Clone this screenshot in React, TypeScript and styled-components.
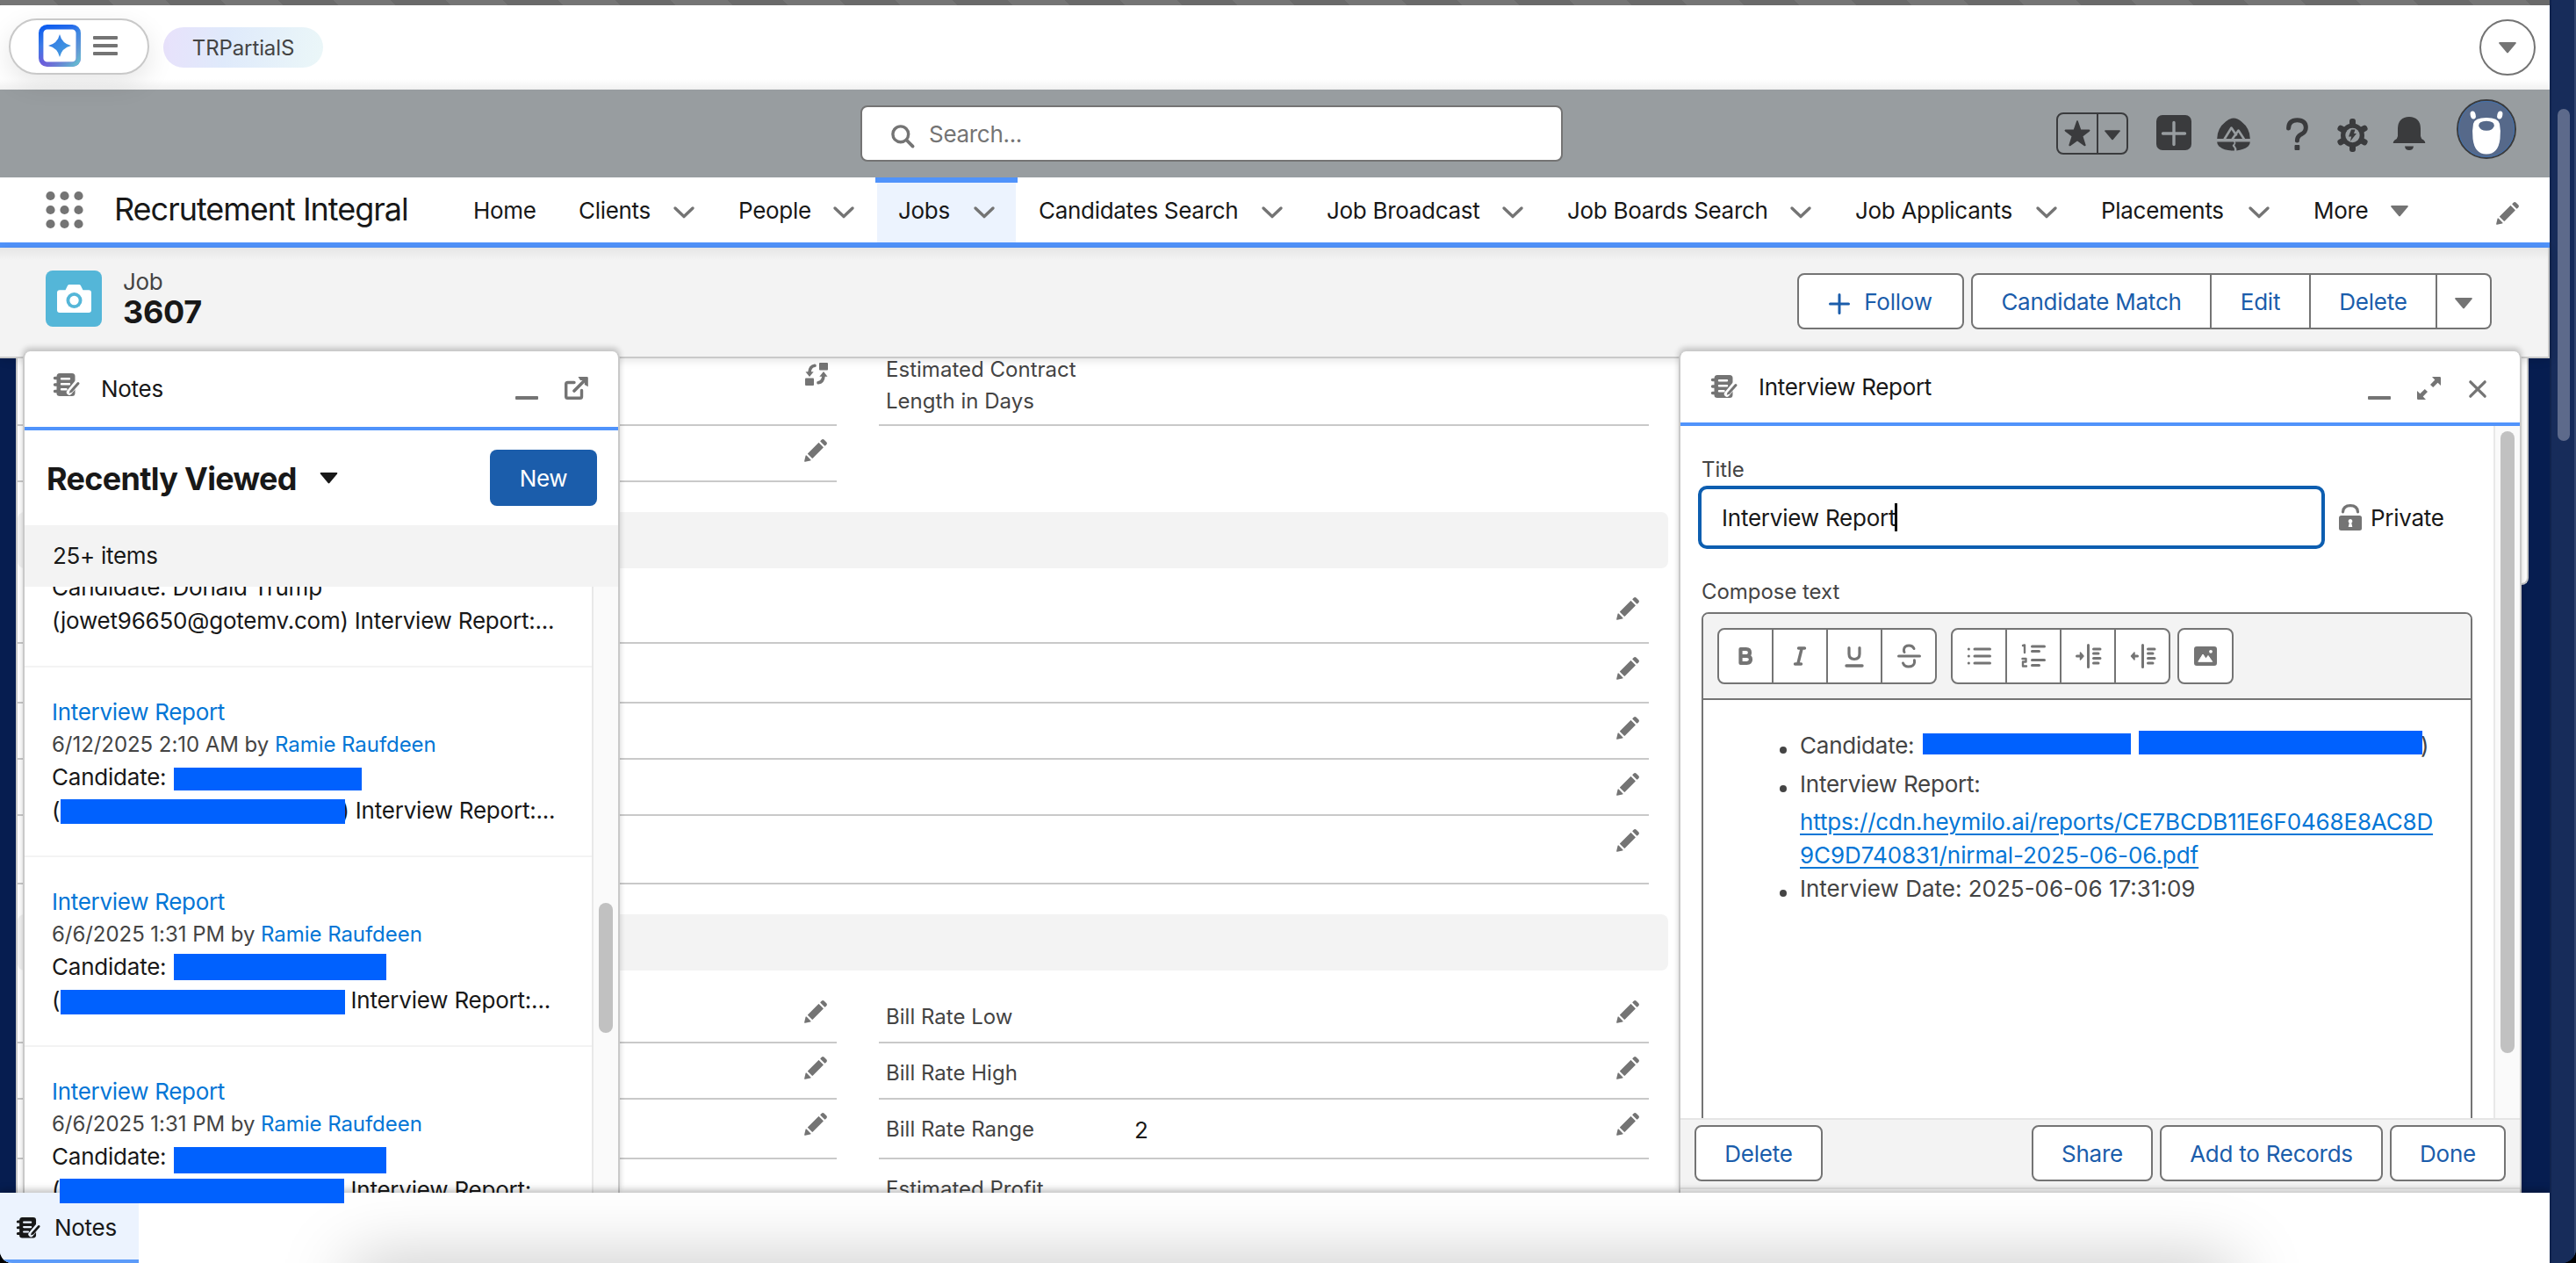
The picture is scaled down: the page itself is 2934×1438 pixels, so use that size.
import React from "react";
import styled, { createGlobalStyle, css } from "styled-components";

const C = {
  text: "#181818",
  weak: "#444444",
  icon: "#747474",
  line: "#c9c9c9",
  gray: "#f3f3f3",
  brand: "#5093fb",
  blue: "#1b5dab",
  link: "#0476d6",
  redact: "#0061fe",
  dark: "#3a3b3d",
};

const GlobalStyle = createGlobalStyle`
  * { box-sizing: border-box; }
  body { margin: 0; background: #000; }
  button { font: inherit; letter-spacing: inherit; padding: 0; margin: 0; }
  ul { list-style: none; margin: 0; padding: 0; }
  svg { display: block; flex: none; overflow: visible; }
`;

/* ---------- frame ---------- */

const Page = styled.div`
  position: relative;
  display: flex;
  width: 2934px;
  height: 1438px;
  overflow: hidden;
  background: #061d4f;
  font-family: Inter, "Liberation Sans", sans-serif;
  font-size: 26px;
  letter-spacing: -0.3px;
  color: ${C.text};
  white-space: nowrap;
  border-radius: 0 0 16px 14px;
`;

const Main = styled.div`
  position: relative;
  width: 2904px;
  display: flex;
  flex-direction: column;
`;

const PageScroll = styled.div`
  width: 30px;
  padding: 124px 5px 0 7px;
  background: #172c5a;
  border-left: 2px solid #10234d;
  border-right: 2px solid #33466f;
`;

const PageThumb = styled.div`
  height: 378px;
  border-radius: 9px;
  background: #5d6a8b;
`;

const Stripes = styled.div`
  height: 6px;
  flex: none;
  background: repeating-linear-gradient(
    45deg,
    #6a6a6a 0 1.4px,
    #757575 1.4px 46.7px,
    #6a6a6a 46.7px 90.51px
  );
`;

/* ---------- top bar ---------- */

const TopBar = styled.header`
  height: 96px;
  flex: none;
  display: flex;
  align-items: flex-start;
  padding: 15px 16px 0 10px;
  background: linear-gradient(#fff 0 84px, #f1f1f1 96px);
`;

const AppPill = styled.div`
  display: flex;
  align-items: center;
  gap: 14px;
  width: 160px;
  height: 64px;
  padding: 0 32px 2px;
  border: 2px solid ${C.line};
  border-radius: 32px;
  background: #fff;
  box-shadow: 0 10px 30px rgba(0, 0, 0, 0.1);
  z-index: 1;
`;

const Sandbox = styled.div`
  width: 182px;
  height: 46px;
  margin: 10px 0 0 16px;
  border-radius: 23px;
  background: linear-gradient(100deg, #e8e1fb, #dfeafb 40%, #ebf7f8);
  display: flex;
  align-items: center;
  justify-content: center;
  font-size: 24px;
  letter-spacing: -0.1px;
  color: ${C.weak};
`;

const RoundButton = styled.button`
  width: 64px;
  height: 64px;
  margin: 1px 0 0 auto;
  border: 2px solid ${C.icon};
  border-radius: 50%;
  background: #fff;
  display: flex;
  align-items: center;
  justify-content: center;
`;

/* ---------- global header ---------- */

const GlobalHeader = styled.div`
  height: 100px;
  flex: none;
  display: flex;
  align-items: flex-start;
  padding: 11px 38px 0 980px;
  background: #989da0;
`;

const Search = styled.div`
  width: 800px;
  height: 64px;
  margin-top: 7px;
  padding-left: 33px;
  border: 2px solid ${C.icon};
  border-radius: 8px;
  background: #fff;
  display: flex;
  align-items: center;
  gap: 16px;
  color: ${C.icon};
  > svg {
    margin-top: 7px;
  }
`;

const HeaderActions = styled.div`
  display: flex;
  align-items: flex-start;
  margin-left: 562px;
`;

const Slot = styled.div<{ $t: number; $l: number }>`
  margin: ${(p) => p.$t}px 0 0 ${(p) => p.$l}px;
`;

const Favorites = styled.div`
  display: flex;
  width: 82px;
  height: 48px;
  margin-top: 15px;
  border: 2px solid ${C.dark};
  border-radius: 8px;
  > span {
    display: flex;
    align-items: center;
    justify-content: center;
  }
  > span:first-child {
    width: 46px;
    border-right: 2px solid ${C.dark};
  }
  > span:last-child {
    flex: 1;
    padding: 3px 1px 0 0;
  }
`;

/* ---------- navigation ---------- */

const Nav = styled.nav`
  height: 80px;
  flex: none;
  display: flex;
  align-items: stretch;
  background: #fff;
  border-bottom: 6px solid ${C.brand};
  padding-right: 34px;
`;

const Launcher = styled.div`
  padding: 16px 0 0 52px;
  width: 130px;
`;

const AppName = styled.div`
  width: 385px;
  font-size: 36px;
  line-height: 73px;
  letter-spacing: -1.02px;
`;

const Tab = styled.div<{ $active?: boolean }>`
  display: flex;
  align-items: center;
  gap: 28px;
  height: 74px;
  margin-right: 2px;
  padding: 0 24px;
  ${(p) =>
    p.$active &&
    css`
      background: #ecf3fe;
      box-shadow: inset 0 6px 0 ${C.brand}, -2px 0 0 ${C.brand}, 2px 0 0 ${C.brand};
      clip-path: polygon(-2px 0, calc(100% + 2px) 0, calc(100% + 2px) 6px, 100% 6px, 100% 100%, 0 100%, 0 6px, -2px 6px);
    `}
`;

const TabLabel = styled.span<{ $w: number }>`
  flex: none;
  width: ${(p) => p.$w}px;
`;

const Down = styled.span<{ $t?: number }>`
  margin-top: ${(p) => p.$t ?? 5}px;
`;

const NavEdit = styled.div`
  margin: 27px 0 0 auto;
`;

/* ---------- record header ---------- */

const RecordHeader = styled.div`
  height: 126px;
  flex: none;
  display: flex;
  padding: 0 64px 0 52px;
  border-bottom: 2px solid ${C.line};
  border-right: 2px solid ${C.line};
  background: linear-gradient(#e6e6e6, ${C.gray} 14px);
  z-index: 1;
  box-shadow: 0 2px 10px rgba(0, 0, 0, 0.12);
`;

const RecordIcon = styled.div`
  width: 64px;
  height: 64px;
  margin: 26px 24px 0 0;
  border-radius: 8px;
  background: #54b6d8;
  display: flex;
  align-items: center;
  justify-content: center;
`;

const RecordTitle = styled.div`
  padding-top: 22px;
  color: ${C.weak};
  line-height: 33px;
  strong {
    display: block;
    font-size: 36px;
    line-height: 37px;
    letter-spacing: -0.3px;
    color: ${C.text};
  }
`;

const RecordActions = styled.div`
  display: flex;
  gap: 8px;
  margin: 29px 0 0 auto;
  color: ${C.blue};
`;

const Button = styled.button<{ $w: number }>`
  display: flex;
  align-items: center;
  justify-content: center;
  gap: 16px;
  width: ${(p) => p.$w}px;
  height: 64px;
  border: 2px solid ${C.icon};
  border-radius: 8px;
  background: #fff;
  color: ${C.blue};
  letter-spacing: -0.25px;
  > svg {
    margin-top: 5px;
  }
`;

const ButtonGroup = styled.div`
  display: flex;
  > ${Button} {
    border-radius: 0;
  }
  > ${Button} + ${Button} {
    border-left: 0;
  }
  > ${Button}:first-child {
    border-radius: 8px 0 0 8px;
  }
  > ${Button}:last-child {
    border-radius: 0 8px 8px 0;
  }
`;

/* ---------- record body ---------- */

const Body = styled.main`
  height: 950px;
  flex: none;
  display: flex;
  padding-left: 18px;
  background: #061d50;
  overflow: hidden;
`;

const DetailCard = styled.section`
  width: 1982px;
  padding-right: 100px;
  border-left: 2px solid ${C.line};
  background: #fff;
`;

const SideCard = styled.section`
  width: 880px;
  height: 258px;
  background: #fff;
  border: 2px solid ${C.line};
  border-width: 0 2px 2px 0;
  border-radius: 0 0 8px 0;
`;

const Section = styled.div`
  display: grid;
  grid-template-columns: 933px 877px;
  column-gap: 48px;
`;

const FullSection = styled.div`
  padding: 18px 22px 0 0;
`;

const Column = styled.div``;

const Band = styled.div<{ $mt: number }>`
  height: 64px;
  margin-top: ${(p) => p.$mt}px;
  border-radius: 8px;
  background: ${C.gray};
`;

const Field = styled.div<{ $h: number; $pt?: number }>`
  display: flex;
  height: ${(p) => p.$h}px;
  padding: ${(p) => p.$pt ?? 14}px 10px 0 8px;
  border-bottom: 2px solid ${C.line};
`;

const FieldLabel = styled.div<{ $mt?: number }>`
  width: 283px;
  margin-top: ${(p) => p.$mt ?? 2}px;
  font-size: 24px;
  line-height: 36px;
  letter-spacing: 0.02px;
  color: ${C.weak};
`;

const FieldValue = styled.div`
  padding-top: 2px;
  line-height: 38px;
`;

const FieldIcon = styled.div`
  margin-left: auto;
`;

/* ---------- docked panels ---------- */

const Panel = styled.section<{ $x: number; $w: number }>`
  position: absolute;
  z-index: 2;
  top: 400px;
  left: ${(p) => p.$x}px;
  width: ${(p) => p.$w}px;
  height: 958px;
  display: flex;
  flex-direction: column;
  border: 2px solid ${C.line};
  border-width: 0 2px;
  border-radius: 8px 8px 0 0;
  background: #fff;
  box-shadow: 0 -4px 6px rgba(0, 0, 0, 0.2);
`;

const PanelHeader = styled.header<{ $h: number; $pl: number; $c: number }>`
  height: ${(p) => p.$h}px;
  flex: none;
  display: flex;
  padding-left: ${(p) => p.$pl}px;
  border-bottom: 4px solid ${C.brand};
  line-height: ${(p) => p.$c * 2}px;
`;

const PanelTitle = styled.div<{ $w: number }>`
  width: ${(p) => p.$w}px;
  margin-left: 24px;
`;

const ListHead = styled.div`
  height: 108px;
  flex: none;
  display: flex;
  align-items: center;
  padding: 0 24px 0 25px;
  h1 {
    margin: 2px 26px 0 0;
    font-size: 36px;
    font-weight: 700;
    letter-spacing: -0.7px;
  }
`;

const NewButton = styled.button`
  width: 122px;
  height: 64px;
  margin: 0 0 0 auto;
  border: 0;
  border-radius: 8px;
  background: ${C.blue};
  color: #fff;
`;

const Count = styled.div`
  height: 70px;
  flex: none;
  padding-left: 32px;
  line-height: 70px;
  background: ${C.gray};
`;

const ListScroll = styled.div`
  flex: 1;
  display: flex;
  min-height: 0;
  overflow: hidden;
`;

const NoteList = styled.div`
  width: 646px;
  margin-top: -18px;
`;

const Note = styled.article<{ $continued?: boolean }>`
  height: ${(p) => (p.$continued ? 110 : 216)}px;
  padding: ${(p) => (p.$continued ? 0 : 31)}px 0 0 31px;
  border-bottom: 2px solid ${C.gray};
  h2 {
    margin: 0;
    font-size: 26px;
    font-weight: 400;
    line-height: 39px;
    color: ${C.link};
  }
`;

const Meta = styled.div`
  font-size: 24px;
  line-height: 36px;
  letter-spacing: -0.05px;
  color: ${C.weak};
  a {
    color: ${C.link};
  }
`;

const Line = styled.div`
  display: flex;
  height: 38px;
  line-height: 38px;
  letter-spacing: -0.22px;
`;

const Redaction = styled.span<{ $w: number; $h: number; $t: number; $ml?: number; $mr?: number }>`
  display: block;
  flex: none;
  position: relative;
  width: ${(p) => p.$w}px;
  height: ${(p) => p.$h}px;
  margin: ${(p) => p.$t}px ${(p) => p.$mr ?? 0}px 0 ${(p) => p.$ml ?? 0}px;
  background: ${C.redact};
`;

const Opening = styled.span`
  flex: none;
  width: 9.5px;
`;

const Track = styled.div<{ $pt: number }>`
  width: 30px;
  padding: ${(p) => p.$pt}px 6px 0;
  border-left: 2px solid #e8e8e8;
  background: #fafafa;
`;

const Thumb = styled.div<{ $h: number }>`
  height: ${(p) => p.$h}px;
  border-radius: 8px;
  background: #c1c1c1;
`;

/* ---------- note composer ---------- */

const Composer = styled.div`
  height: 788px;
  flex: none;
  display: flex;
  overflow: hidden;
`;

const Form = styled.div`
  width: 926px;
  padding: 32px 22px 0 20px;
`;

const Label = styled.label`
  display: block;
  margin-left: 4px;
  font-size: 24px;
  line-height: 36px;
  letter-spacing: -0.05px;
  color: ${C.weak};
`;

const TitleRow = styled.div`
  display: flex;
  align-items: center;
  margin-bottom: 31px;
`;

const TitleInput = styled.div`
  width: 714px;
  height: 72px;
  padding-left: 23px;
  margin-right: 16px;
  display: flex;
  align-items: center;
  border: 4px solid #0d5eb0;
  border-radius: 10px;
  letter-spacing: -0.22px;
`;

const Caret = styled.i`
  width: 3px;
  height: 32px;
  margin-left: -1px;
  background: #000;
`;

const Privacy = styled.span`
  margin-left: 10px;
`;

const Editor = styled.div`
  width: 878px;
  height: 620px;
  margin: 5px 0 0 4px;
  border: 2px solid ${C.icon};
  border-radius: 8px 8px 0 0;
`;

const Toolbar = styled.div`
  height: 98px;
  padding: 16px;
  display: flex;
  background: ${C.gray};
  border-bottom: 2px solid ${C.icon};
  border-radius: 6px 6px 0 0;
`;

const ToolGroup = styled.div<{ $mr: number }>`
  display: flex;
  height: 64px;
  margin-right: ${(p) => p.$mr}px;
  border: 2px solid ${C.icon};
  border-radius: 8px;
  background: #fff;
`;

const Tool = styled.span`
  width: 60px;
  display: flex;
  align-items: center;
  justify-content: center;
  & + & {
    width: 62px;
    border-left: 2px solid ${C.icon};
  }
`;

const Content = styled.ul`
  padding: 33px 0 0 87px;
  color: ${C.weak};
`;

const Item = styled.li<{ $mb?: number; $track?: number }>`
  display: flex;
  margin-bottom: ${(p) => p.$mb ?? 0}px;
  line-height: 38px;
  letter-spacing: ${(p) => p.$track ?? -0.22}px;
  &::before {
    content: "";
    flex: none;
    width: 8px;
    height: 8px;
    margin: 20px 15px 0 0;
    border-radius: 50%;
    background: ${C.weak};
  }
`;

const ReportLink = styled.a`
  display: block;
  margin-top: 5px;
  color: ${C.link};
  text-decoration: underline;
  text-decoration-thickness: 2px;
  text-underline-offset: 4px;
  letter-spacing: -0.16px;
  span {
    letter-spacing: -0.06px;
  }
`;

const PanelFooter = styled.footer`
  flex: none;
  height: 81px;
  display: flex;
  padding: 6px 16px 0;
  gap: 8px;
  border-top: 2px solid #e5e5e5;
  border-bottom: 2px solid #e5e5e5;
  background: ${C.gray};
  > ${Button}:first-child {
    margin-right: auto;
  }
`;

/* ---------- utility bar ---------- */

const UtilityBar = styled.footer`
  position: relative;
  z-index: 3;
  height: 80px;
  flex: none;
  display: flex;
  background: #fff;
  box-shadow: 0 -3px 8px rgba(0, 0, 0, 0.26);
  clip-path: inset(-12px 0 0 0);
  &::after {
    content: "";
    position: absolute;
    top: 80px;
    left: 400px;
    right: 360px;
    height: 60px;
    box-shadow: 0 0 80px rgba(0, 0, 0, 0.25);
  }
`;

const UtilityItem = styled.div`
  width: 158px;
  display: flex;
  align-items: center;
  gap: 16px;
  padding: 3px 0 0 19px;
  background: #ecf3fe;
  border-bottom: 4px solid #5c9bf9;
`;

const SpillOver = styled(Redaction)`
  position: absolute;
  z-index: 4;
  left: 68px;
  top: 1342px;
`;

/* ---------- icons ---------- */

const Chevron = () => (
  <svg width="24" height="14" viewBox="0 0 24 14">
    <path d="M2 2 L12 11.6 L22 2" fill="none" stroke={C.icon} strokeWidth="3.4" strokeLinecap="round" strokeLinejoin="round" />
  </svg>
);

const Triangle = ({ w = 20, h = 13, fill = C.icon }) => (
  <svg width={w} height={h} viewBox="0 0 20 13">
    <path d="M1 0h18q1.4.2.6 1.4L10.8 12q-.8.9-1.6 0L.4 1.4Q-.4.2 1 0z" fill={fill} />
  </svg>
);

const Pencil = ({ size = 28 }) => (
  <svg width={size} height={size} viewBox="0 0 52 52" fill={C.icon}>
    <path d="M9.5 33.4l8.9 8.9c.4.4 1 .4 1.4 0L42 20c.4-.4.4-1 0-1.4l-8.8-8.8c-.4-.4-1-.4-1.4 0L9.5 32.1c-.4.4-.4 1 0 1.3zM36.1 5.7c-.4.4-.4 1 0 1.4l8.8 8.8c.4.4 1 .4 1.4 0l2.5-2.5c1.6-1.5 1.6-3.9 0-5.5l-4.7-4.7c-1.6-1.6-4.1-1.6-5.7 0l-2.3 2.5zM2.1 48.2c-.2 1 .7 1.9 1.7 1.7l10.9-2.6c.4-.1.7-.3.9-.5l.2-.2c.2-.2.3-.9-.1-1.3l-9-9c-.4-.4-1.1-.3-1.3-.1l-.2.2c-.3.3-.4.6-.5.9L2.1 48.2z" />
  </svg>
);

const NotesIcon = ({ fill = C.icon, bg = "#fff", w = 30 }) => (
  <svg width={w} height={(w * 26) / 30} viewBox="0 0 30 26">
    <path d="M7 0h14q3.5 0 3.5 3.5v19q0 3.5-3.5 3.5H7q-3.5 0-3.5-3v-19Q3.5 0 7 0z" fill={fill} />
    <path d="M1.5 5.5h4M1.5 13h4M1.5 20.5h4" stroke={fill} strokeWidth="3.4" strokeLinecap="round" />
    <path d="M9 6.3h9M9 12.3h9M9 18.3h5.5" stroke={bg} strokeWidth="2.4" strokeLinecap="round" />
    <path d="M28 9.500L18 21.500" stroke={bg} strokeWidth="6.4" strokeLinecap="round" />
    <path d="M28 11.5L20.5 20" stroke={fill} strokeWidth="3" strokeLinecap="round" />
    <path d="M17.6 22.8l1.2-3.6 2.4 2.2z" fill={fill} />
  </svg>
);

const Minimize = () => (
  <svg width="26" height="4" viewBox="0 0 26 4">
    <rect width="26" height="4" rx="1" fill={C.icon} />
  </svg>
);

const PopOut = () => (
  <svg width="27" height="26" viewBox="0 0 27 26" fill="none" stroke={C.icon}>
    <path d="M11 6.500H3.500Q1.700 6.500 1.700 8.300V22.500Q1.700 24.300 3.500 24.300H17.700Q19.500 24.300 19.500 22.500V15.500" strokeWidth="3.4" strokeLinecap="round" />
    <path d="M11 16L23 4" strokeWidth="3.8" strokeLinecap="round" />
    <path d="M15.500 0H25.500Q26.800 0 26.800 1.300V11.300L22.800 9V4H18z" fill={C.icon} stroke="none" />
  </svg>
);

const Expand = () => (
  <svg width="27" height="26" viewBox="0 0 27 26" fill={C.icon}>
    <path d="M17 0H25.700Q27 0 27 1.300V10L23.600 6.800L18.200 12L15 8.900L20.300 3.400z" />
    <path d="M10 26H1.300Q0 26 0 24.700V16L3.400 19.200L8.800 14L12 17.100L6.700 22.600z" />
  </svg>
);

const Close = () => (
  <svg width="20" height="20" viewBox="0 0 20 20" stroke={C.icon} strokeWidth="3.2" strokeLinecap="round">
    <path d="M1.800 1.800L18.200 18.200M18.200 1.800L1.800 18.200" />
  </svg>
);

const Magnifier = () => (
  <svg width="27" height="27" viewBox="0 0 27 27" fill="none" stroke={C.icon} strokeWidth="3.4" strokeLinecap="round">
    <circle cx="10.800" cy="10.800" r="8.900" />
    <path d="M17.500 17.500L24.600 24.600" strokeWidth="3.8" />
  </svg>
);

const AppLogo = () => (
  <svg width="48" height="48" viewBox="0 0 48 48">
    <defs>
      <linearGradient id="edge" x1="0" y1="0" x2="0.35" y2="1">
        <stop offset="0" stopColor="#0b5cf0" />
        <stop offset="0.45" stopColor="#3b7ae6" />
        <stop offset="1" stopColor="#7a56d8" />
      </linearGradient>
      <linearGradient id="teal" x1="0.2" y1="0.3" x2="1" y2="1">
        <stop offset="0.3" stopColor="#46b0d0" stopOpacity="0" />
        <stop offset="1" stopColor="#66bfd0" />
      </linearGradient>
      <linearGradient id="spark" x1="0" y1="0" x2="1" y2="1">
        <stop offset="0" stopColor="#2c73e8" />
        <stop offset="1" stopColor="#4aa3dc" />
      </linearGradient>
    </defs>
    <rect x="2.7" y="2.7" width="42.6" height="42.6" rx="7" fill="#fff" stroke="url(#edge)" strokeWidth="5.4" />
    <rect x="2.7" y="2.7" width="42.6" height="42.6" rx="7" fill="none" stroke="url(#teal)" strokeWidth="5.4" />
    <path d="M24 11Q26.500 21.500 37 24Q26.500 26.500 24 37Q21.500 26.500 11 24Q21.500 21.500 24 11z" fill="url(#spark)" />
  </svg>
);

const Hamburger = () => (
  <svg width="28" height="22" viewBox="0 0 28 22" fill={C.icon}>
    <rect width="28" height="4" rx="1" />
    <rect y="9" width="28" height="4" rx="1" />
    <rect y="18" width="28" height="4" rx="1" />
  </svg>
);

const Waffle = () => (
  <svg width="43" height="42" viewBox="0 0 43 42" fill={C.icon}>
    {[5, 21, 37].map((y) => [5.5, 21.5, 37.5].map((x) => <circle key={`${x}-${y}`} cx={x} cy={y} r="5.1" />))}
  </svg>
);

const Star = () => (
  <svg width="30" height="30" viewBox="0 0 30 30" fill={C.dark}>
    <path d="M14.100 1Q15 -.8 15.900 1L19.200 10.600H28.500Q30.300 11 29 12.600L21.500 18.200L24.600 28Q24.800 29.800 23 29.200L15 23.400L7 29.200Q5.200 29.800 5.400 28L8.500 18.200L1 12.600Q-.3 11 1.500 10.600H10.800z" />
  </svg>
);

const AddTile = () => (
  <svg width="40" height="40" viewBox="0 0 40 40">
    <rect width="40" height="40" rx="7" fill={C.dark} />
    <path d="M20 8.500V33.500M7.500 21H32.500" stroke="#989da0" strokeWidth="3.4" strokeLinecap="round" />
  </svg>
);

const Trailhead = () => (
  <svg width="38" height="38" viewBox="0 0 38 38">
    <path d="M.2 24Q.3 12 10 4.500Q19-3.500 28 4.500Q37.700 12 37.800 24z" fill={C.dark} />
    <path d="M8.500 24.500L16.500 11.500L22.500 20.500M17.500 24.500L24.500 14.500L31 24.500" fill="none" stroke="#989da0" strokeWidth="2.6" strokeLinejoin="round" />
    <path d="M.2 27.500H18.800Q20.600 28.600 18.800 30.300Q16.600 31.700 19 33.800Q20.300 34.800 19.800 37.500Q9 38 2.300 32.500Q.1 30 .2 27.500z" fill={C.dark} />
    <path d="M20.800 27.500H37.800Q37.900 30 35.700 32.500Q30.500 36.800 22.400 37.400Q22.700 34.500 20.600 32.300Q19.500 31.200 21 30Q22 29 20.800 27.500z" fill={C.dark} />
  </svg>
);

const Question = () => (
  <svg width="25" height="37" viewBox="0 0 25 37">
    <path d="M2.600 12Q2.800 2.700 12.500 2.700Q22.300 2.900 22.300 11.200Q22.300 16.400 17 18.900Q12.400 21.500 12.400 26" fill="none" stroke={C.dark} strokeWidth="5" strokeLinecap="round" />
    <rect x="9.5" y="31" width="5.8" height="6" rx="1" fill={C.dark} />
  </svg>
);

const Gear = () => (
  <svg width="35" height="38" viewBox="0 0 35 38">
    {[0, 60, 120].map((a) => (
      <rect key={a} x="14" y="0" width="7" height="38" rx="3" fill={C.dark} transform={`rotate(${a} 17.5 19)`} />
    ))}
    <circle cx="17.5" cy="19" r="13.5" fill={C.dark} />
    <circle cx="17.5" cy="19" r="8.2" fill="#989da0" />
    <path d="M16 12.500H20.500L19 17H22L14.800 26L16.200 20.500H13z" fill={C.dark} />
  </svg>
);

const Bell = () => (
  <svg width="38" height="38" viewBox="0 0 38 38" fill={C.dark}>
    <path d="M19 0Q31.500.5 32 13V22Q32.300 25 35.500 26.500Q37.500 28 37.300 30H.7Q.5 28 2.500 26.500Q5.700 25 6 22V13Q6.500.5 19 0z" />
    <path d="M14 33.500H24Q23.500 38 19 38Q14.500 38 14 33.500z" />
  </svg>
);

const Avatar = () => (
  <svg width="68" height="68" viewBox="0 0 68 68">
    <circle cx="34" cy="34" r="33" fill="#56698a" stroke={C.dark} strokeWidth="2" />
    <circle cx="34" cy="34" r="31.6" fill="none" stroke="#4372ad" strokeWidth="1" />
    <ellipse cx="18.7" cy="18" rx="3" ry="4.6" fill="#fff" transform="rotate(-12 18.7 18)" />
    <ellipse cx="49.3" cy="18" rx="3" ry="4.6" fill="#fff" transform="rotate(12 49.3 18)" />
    <path d="M34 21Q47.500 21 49 28Q50.600 36 49.500 45Q47.500 62.500 34 62.600Q20.500 62.500 18.500 45Q17.400 36 19 28Q20.500 21 34 21z" fill="#fff" />
    <path d="M34 24.800Q43 25 42.800 30.200Q41 35.800 34 35.800Q27 35.800 25.200 30.200Q25 25 34 24.800z" fill="#56698a" />
  </svg>
);

const Camera = () => (
  <svg width="39" height="32" viewBox="0 0 39 32">
    <path d="M3 6.300H9.500L12 1.300Q12.700 0 14 0H25Q26.300 0 27 1.300L29.500 6.300H36Q39 6.500 39 9.300V29Q39 31.800 36 32H3Q0 31.800 0 29V9.300Q0 6.500 3 6.300z" fill="#fff" />
    <circle cx="19.5" cy="18" r="9" fill="#54b6d8" />
    <circle cx="19.5" cy="18" r="5.2" fill="#fff" />
  </svg>
);

const Plus = () => (
  <svg width="24" height="24" viewBox="0 0 24 24" stroke={C.blue} strokeWidth="3" strokeLinecap="round">
    <path d="M12 1.500V22.500M1.500 12H22.500" />
  </svg>
);

const Swap = () => (
  <svg width="26" height="26" viewBox="0 0 26 26">
    <rect x="16" y="0" width="10" height="8.5" rx="1" fill={C.icon} />
    <rect x="0" y="17.5" width="10" height="8.5" rx="1" fill={C.icon} />
    <path d="M11 3.300Q5.500 4 5 11" fill="none" stroke={C.icon} strokeWidth="3.6" strokeLinecap="round" />
    <path d="M.5 10.200H9.700L5 16z" fill={C.icon} />
    <path d="M15 22.700Q20.500 22 21 15" fill="none" stroke={C.icon} strokeWidth="3.6" strokeLinecap="round" />
    <path d="M16.300 15.800H25.500L21 10z" fill={C.icon} />
  </svg>
);

const Lock = () => (
  <svg width="26" height="30" viewBox="0 0 26 30">
    <path d="M4.500 8.800Q5 1.700 13 1.700Q21 1.700 21.500 8.800" fill="none" stroke={C.icon} strokeWidth="3.2" strokeLinecap="round" />
    <rect x="0" y="13" width="26" height="17" rx="2.5" fill={C.icon} />
    <path d="M13 17a2.4 2.4 0 0 1 1.3 4.4L15.300 26H10.700L11.700 21.400A2.4 2.4 0 0 1 13 17z" fill="#fff" />
  </svg>
);

const ToolIcon = ({ children }: { children: React.ReactNode }) => (
  <svg width="32" height="32" viewBox="0 0 32 32" fill="none" stroke={C.icon} strokeWidth="3" strokeLinecap="round" strokeLinejoin="round">
    {children}
  </svg>
);

const BoldIcon = () => (
  <ToolIcon>
    <path d="M10.500 8V24H17.500Q22 23.800 22 19.800Q22 16 17.500 16Q21 15.700 21 12Q21 8.100 16.800 8zM10.500 16H17.500" strokeWidth="4.2" />
  </ToolIcon>
);
const ItalicIcon = () => (
  <ToolIcon>
    <path d="M14.500 7H21.500M10.500 25H17.500M18 8L14 24" strokeWidth="3.4" />
  </ToolIcon>
);
const UnderlineIcon = () => (
  <ToolIcon>
    <path d="M10 6.500V13.500Q10 19.500 16 19.500Q22 19.500 22 13.500V6.500" strokeWidth="3.2" />
    <path d="M7 27H25" strokeWidth="3.4" />
  </ToolIcon>
);
const StrikeIcon = () => (
  <ToolIcon>
    <path d="M22 7.500Q20.500 4 16.500 4Q11 4 10.500 8.500Q10.300 10.500 11 11.500M9.500 24Q11 28 15.500 28Q21.800 28 22.500 23.500Q22.600 22 22.400 20.800" />
    <path d="M4.500 16H28.500" />
  </ToolIcon>
);
const BulletIcon = () => (
  <ToolIcon>
    <path d="M4.300 8H4.400M4.300 16H4.400M4.300 24H4.400M11 8H28.500M11 16H28.500M11 24H28.500" />
  </ToolIcon>
);
const NumberIcon = () => (
  <ToolIcon>
    <path d="M4 4L6 3.500V12M3.500 19H7.500V22.500H4V27.500H8" strokeWidth="2.4" />
    <path d="M14.500 5H28.500M14.500 10.500H22.500M14.500 20.500H28.500M14.500 26.500H22.500" />
  </ToolIcon>
);
const IndentIcon = () => (
  <ToolIcon>
    <path d="M16.500 3.500V28.500M22.500 8H30M22.500 13H28M22.500 18.500H30M22.500 24H28" />
    <path d="M3.500 16H8" />
    <path d="M7.500 12L11 16L7.500 20z" fill={C.icon} strokeWidth="1.5" />
  </ToolIcon>
);
const OutdentIcon = () => (
  <ToolIcon>
    <path d="M16.500 3.500V28.500M22.500 8H30M22.500 13H28M22.500 18.500H30M22.500 24H28" />
    <path d="M6 16H10.500" />
    <path d="M7 12L3.500 16L7 20z" fill={C.icon} strokeWidth="1.5" />
  </ToolIcon>
);
const ImageIcon = () => (
  <ToolIcon>
    <rect x="4" y="6" width="24" height="20" rx="2" fill={C.icon} strokeWidth="2" />
    <path d="M8 22L13 14L16.500 19L19 15.500L23.500 22z" fill="#fff" stroke="#fff" strokeWidth="1" />
    <circle cx="22" cy="10.800" r="1.9" fill="#fff" stroke="none" />
  </ToolIcon>
);

/* ---------- data ---------- */

const tabs = [
  { label: "Home", w: 70, menu: "none" },
  { label: "Clients", w: 80 },
  { label: "People", w: 80 },
  { label: "Jobs", w: 58, active: true },
  { label: "Candidates Search", w: 226 },
  { label: "Job Broadcast", w: 172 },
  { label: "Job Boards Search", w: 226 },
  { label: "Job Applicants", w: 178 },
  { label: "Placements", w: 140 },
  { label: "More", w: 60, menu: "triangle" },
];

const rateFields = [
  { label: "Bill Rate Low", h: 65 },
  { label: "Bill Rate High", h: 64 },
  { label: "Bill Rate Range", value: "2", h: 68 },
];

export default function App() {
  return (
    <>
      <GlobalStyle />
      <Page>
        <Main>
          <Stripes />
          <TopBar>
            <AppPill>
              <AppLogo />
              <Hamburger />
            </AppPill>
            <Sandbox>TRPartialS</Sandbox>
            <RoundButton aria-label="Open menu">
              <Triangle />
            </RoundButton>
          </TopBar>

          <GlobalHeader>
            <Search>
              <Magnifier />
              <span>Search...</span>
            </Search>
            <HeaderActions>
              <Favorites>
                <span><Star /></span>
                <span><Triangle w={18} h={12} fill={C.dark} /></span>
              </Favorites>
              <Slot $t={18} $l={32}><AddTile /></Slot>
              <Slot $t={21} $l={29}><Trailhead /></Slot>
              <Slot $t={21} $l={41}><Question /></Slot>
              <Slot $t={22} $l={33}><Gear /></Slot>
              <Slot $t={20} $l={28}><Bell /></Slot>
              <Slot $t={0} $l={35}><Avatar /></Slot>
            </HeaderActions>
          </GlobalHeader>

          <Nav>
            <Launcher><Waffle /></Launcher>
            <AppName>Recrutement Integral</AppName>
            {tabs.map((t) => (
              <Tab key={t.label} $active={t.active}>
                <TabLabel $w={t.w}>{t.label}</TabLabel>
                {t.menu !== "none" && (
                  <Down $t={t.menu ? 2 : 6}>{t.menu ? <Triangle /> : <Chevron />}</Down>
                )}
              </Tab>
            ))}
            <NavEdit><Pencil /></NavEdit>
          </Nav>

          <RecordHeader>
            <RecordIcon><Camera /></RecordIcon>
            <RecordTitle>
              Job
              <strong>3607</strong>
            </RecordTitle>
            <RecordActions>
              <Button $w={190}><Plus />Follow</Button>
              <ButtonGroup>
                <Button $w={274}>Candidate Match</Button>
                <Button $w={113}>Edit</Button>
                <Button $w={144}>Delete</Button>
                <Button $w={62} aria-label="More actions"><Down $t={4}><Triangle /></Down></Button>
              </ButtonGroup>
            </RecordActions>
          </RecordHeader>

          <Body>
            <DetailCard>
              <Section>
                <Column>
                  <Field $h={77} $pt={5}><FieldIcon><Swap /></FieldIcon></Field>
                  <Field $h={64}><FieldIcon><Pencil /></FieldIcon></Field>
                </Column>
                <Column>
                  <Field $h={77} $pt={0}>
                    <FieldLabel $mt={-5}>
                      <div>Estimated Contract</div>
                      <div>Length in Days</div>
                    </FieldLabel>
                  </Field>
                </Column>
              </Section>
              <Band $mt={34} />
              <FullSection>
                {[68, 68, 64, 64, 78].map((h, i) => (
                  <Field key={i} $h={h}><FieldIcon><Pencil /></FieldIcon></Field>
                ))}
              </FullSection>
              <Band $mt={34} />
              <FullSection>
                <Section>
                  <Column>
                    {rateFields.map((f) => (
                      <Field key={f.label} $h={f.h} $pt={f.h === 65 ? 15 : 14}><FieldIcon><Pencil /></FieldIcon></Field>
                    ))}
                  </Column>
                  <Column>
                    {rateFields.map((f) => (
                      <Field key={f.label} $h={f.h} $pt={f.h === 65 ? 15 : 14}>
                        <FieldLabel>{f.label}</FieldLabel>
                        <FieldValue>{f.value}</FieldValue>
                        <FieldIcon><Pencil /></FieldIcon>
                      </Field>
                    ))}
                    <Field $h={64}><FieldLabel>Estimated Profit</FieldLabel></Field>
                  </Column>
                </Section>
              </FullSection>
            </DetailCard>
            <SideCard />
          </Body>

          <UtilityBar>
            <UtilityItem>
              <NotesIcon fill={C.text} bg="#ecf3fe" w={27} />
              Notes
            </UtilityItem>
          </UtilityBar>

          <Panel $x={26} $w={680}>
            <PanelHeader $h={90} $pl={33} $c={42.5}>
              <Slot $t={25} $l={0}><NotesIcon /></Slot>
              <PanelTitle $w={71}>Notes</PanelTitle>
              <Slot $t={51} $l={401}><Minimize /></Slot>
              <Slot $t={29} $l={30}><PopOut /></Slot>
            </PanelHeader>
            <ListHead>
              <h1>Recently Viewed</h1>
              <Triangle w={21} fill={C.text} />
              <NewButton>New</NewButton>
            </ListHead>
            <Count>25+ items</Count>
            <ListScroll>
              <NoteList>
                <Note $continued>
                  <Line>Candidate: Donald Trump</Line>
                  <Line>(jowet96650@gotemv.com) Interview Report:...</Line>
                </Note>
                <Note>
                  <h2>Interview Report</h2>
                  <Meta>6/12/2025 2:10 AM by <a>Ramie Raufdeen</a></Meta>
                  <Line>
                    <TabLabel $w={139}>Candidate:</TabLabel>
                    <Redaction $w={214} $h={26} $t={8} />
                  </Line>
                  <Line>
                    <Opening>(</Opening>
                    <Redaction $w={324} $h={28} $t={6} $mr={-4} />
                    <span>) Interview Report:...</span>
                  </Line>
                </Note>
                <Note>
                  <h2>Interview Report</h2>
                  <Meta>6/6/2025 1:31 PM by <a>Ramie Raufdeen</a></Meta>
                  <Line>
                    <TabLabel $w={139}>Candidate:</TabLabel>
                    <Redaction $w={242} $h={30} $t={4} />
                  </Line>
                  <Line>
                    <Opening>(</Opening>
                    <Redaction $w={324} $h={28} $t={7} $mr={7} />
                    <span>Interview Report:...</span>
                  </Line>
                </Note>
                <Note>
                  <h2>Interview Report</h2>
                  <Meta>6/6/2025 1:31 PM by <a>Ramie Raufdeen</a></Meta>
                  <Line>
                    <TabLabel $w={139}>Candidate:</TabLabel>
                    <Redaction $w={242} $h={30} $t={8} />
                  </Line>
                  <Line>
                    <TabLabel $w={340.5}>(</TabLabel>
                    <span>Interview Report:...</span>
                  </Line>
                </Note>
              </NoteList>
              <Track $pt={360}><Thumb $h={148} /></Track>
            </ListScroll>
          </Panel>

          <Panel $x={1912} $w={960}>
            <PanelHeader $h={85} $pl={35} $c={41}>
              <Slot $t={27} $l={0}><NotesIcon /></Slot>
              <PanelTitle $w={201}>Interview Report</PanelTitle>
              <Slot $t={51} $l={493}><Minimize /></Slot>
              <Slot $t={29} $l={30}><Expand /></Slot>
              <Slot $t={33} $l={32}><Close /></Slot>
            </PanelHeader>
            <Composer>
              <Form>
                <Label>Title</Label>
                <TitleRow>
                  <TitleInput>
                    <span>Interview Report</span>
                    <Caret />
                  </TitleInput>
                  <Lock />
                  <Privacy>Private</Privacy>
                </TitleRow>
                <Label>Compose text</Label>
                <Editor>
                  <Toolbar>
                    <ToolGroup $mr={16}>
                      <Tool><BoldIcon /></Tool>
                      <Tool><ItalicIcon /></Tool>
                      <Tool><UnderlineIcon /></Tool>
                      <Tool><StrikeIcon /></Tool>
                    </ToolGroup>
                    <ToolGroup $mr={8}>
                      <Tool><BulletIcon /></Tool>
                      <Tool><NumberIcon /></Tool>
                      <Tool><IndentIcon /></Tool>
                      <Tool><OutdentIcon /></Tool>
                    </ToolGroup>
                    <ToolGroup $mr={0}>
                      <Tool><ImageIcon /></Tool>
                    </ToolGroup>
                  </Toolbar>
                  <Content>
                    <Item $mb={6}>
                      <TabLabel $w={140}>Candidate:</TabLabel>
                      <Redaction $w={237} $h={24} $t={5} $mr={9} />
                      <Redaction $w={323} $h={27} $t={2} $mr={-2} />
                      <span>)</span>
                    </Item>
                    <Item>
                      <div>
                        Interview Report:
                        <ReportLink>
                          https://cdn.heymilo.ai/reports/CE7BCDB11E6F0468E8AC8D
                          <br />
                          <span>9C9D740831/nirmal-2025-06-06.pdf</span>
                        </ReportLink>
                      </div>
                    </Item>
                    <Item $track={0}>Interview Date: 2025-06-06 17:31:09</Item>
                  </Content>
                </Editor>
              </Form>
              <Track $pt={6}><Thumb $h={708} /></Track>
            </Composer>
            <PanelFooter>
              <Button $w={146}>Delete</Button>
              <Button $w={138}>Share</Button>
              <Button $w={254}>Add to Records</Button>
              <Button $w={132}>Done</Button>
            </PanelFooter>
          </Panel>

          <SpillOver $w={324} $h={28} $t={0} />
        </Main>
        <PageScroll>
          <PageThumb />
        </PageScroll>
      </Page>
    </>
  );
}
